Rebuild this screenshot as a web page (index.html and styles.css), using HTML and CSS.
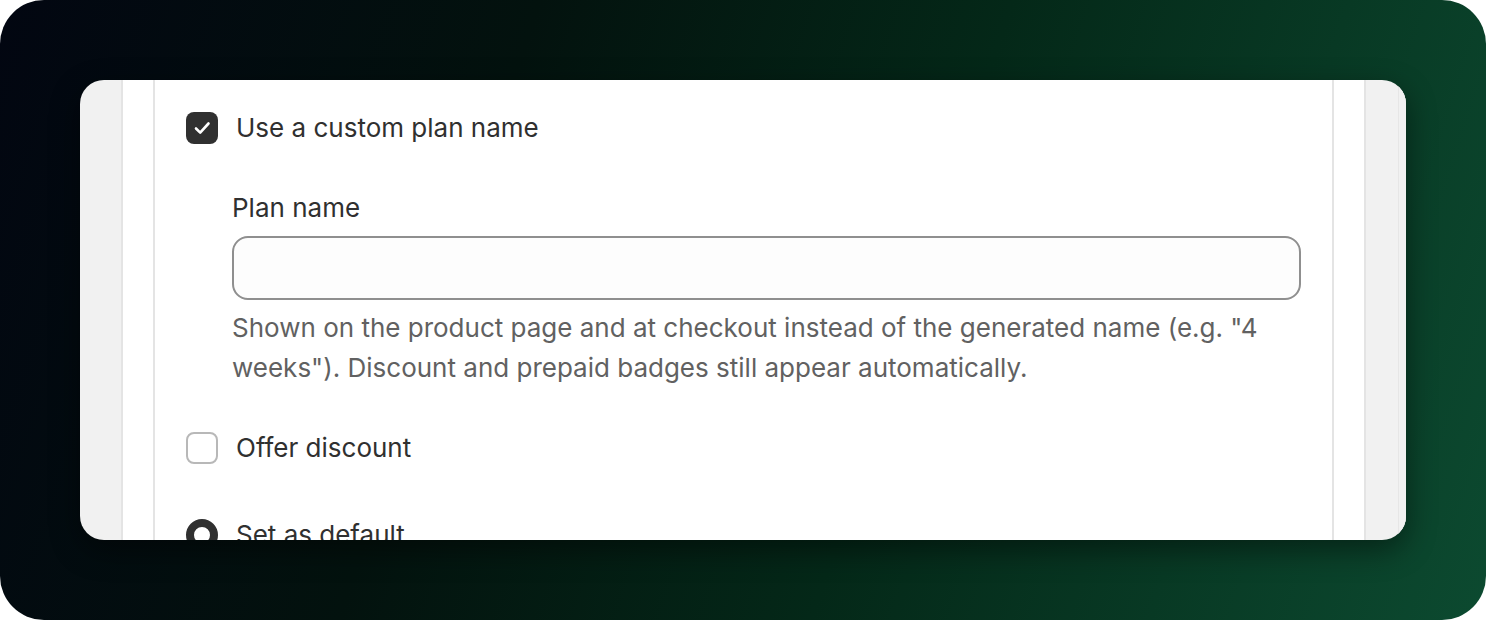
FILE: index.html
```html
<!DOCTYPE html>
<html lang="en">
<head>
<meta charset="utf-8">
<title>Plan settings</title>
<link rel="stylesheet" href="styles.css">
</head>
<body>
<div class="frame">
  <div class="card">
    <div class="gutter"></div>
    <div class="panel">
      <div class="section">
        <div class="choice choice-first">
          <span class="box box-checked">
            <svg viewBox="0 0 32 32" width="32" height="32" aria-hidden="true">
              <path d="M10 16.5 L14.2 20.6 L22.5 11.5" fill="none" stroke="#ffffff" stroke-width="2.6" stroke-linecap="round" stroke-linejoin="round"/>
            </svg>
          </span>
          <span class="choice-label">Use a custom plan name</span>
        </div>
        <div class="nested">
          <div class="field-label">Plan name</div>
          <div class="input"></div>
          <div class="help">Shown on the product page and at checkout instead of the generated name (e.g. "4 weeks"). Discount and prepaid badges still appear automatically.</div>
        </div>
        <div class="choice choice-second">
          <span class="box"></span>
          <span class="choice-label">Offer discount</span>
        </div>
        <div class="choice choice-third">
          <span class="radio"></span>
          <span class="choice-label">Set as default</span>
        </div>
      </div>
    </div>
    <div class="gutter gutter-right"></div>
  </div>
</div>
</body>
</html>
```

FILE: styles.css
```css
* { box-sizing: border-box; }
html, body { margin: 0; padding: 0; background: #ffffff; }
body {
  font-family: Inter, "Liberation Sans", sans-serif;
  color: #303030;
}
.frame {
  width: 1486px;
  height: 620px;
  border-radius: 44px;
  padding: 80px;
  background: linear-gradient(108deg, #020611 0%, #03120e 32%, #042818 60%, #0c4a30 100%);
  overflow: hidden;
}
.card {
  width: 1326px;
  height: 460px;
  border-radius: 24px;
  background: #f1f1f1;
  overflow: hidden;
  display: flex;
  box-shadow: 0 10px 30px rgba(0, 0, 0, 0.45);
}
.gutter {
  width: 41px;
  flex: none;
}
.gutter-right {
  width: 40px;
  box-shadow: inset -7px 0 0 #f1f1f1, inset -8px 0 0 #e6e6e6;
}
.panel {
  flex: 1;
  background: #ffffff;
  border-left: 2px solid #e4e4e4;
  border-right: 2px solid #e4e4e4;
  padding: 0 30px;
}
.section {
  height: 100%;
  border-left: 2px solid #e4e4e4;
  border-right: 2px solid #e4e4e4;
  padding: 28px 31px 0 31px;
}
.choice {
  display: flex;
  align-items: center;
  height: 40px;
  gap: 18px;
}
.choice-label {
  font-size: 26px;
  line-height: 40px;
  font-weight: 400;
  color: #303030;
}
.box {
  width: 32px;
  height: 32px;
  flex: none;
  border-radius: 8px;
  border: 2px solid #b8b8b8;
  background: #ffffff;
  display: flex;
}
.box-checked {
  border: none;
  background: #303030;
}
.box svg { display: block; }
.nested {
  padding-left: 46px;
  margin-top: 40px;
}
.field-label {
  font-size: 26px;
  line-height: 40px;
  font-weight: 400;
  color: #303030;
}
.input {
  margin-top: 8px;
  height: 64px;
  border: 2px solid #8f8f8f;
  border-radius: 16px;
  background: #fdfdfd;
}
.help {
  margin-top: 8px;
  font-size: 26px;
  line-height: 40px;
  color: #616161;
}
.choice-second { margin-top: 40px; }
.choice-third { margin-top: 47px; }
.radio {
  width: 32px;
  height: 32px;
  flex: none;
  border-radius: 50%;
  border: 8px solid #303030;
  background: #ffffff;
}
```
